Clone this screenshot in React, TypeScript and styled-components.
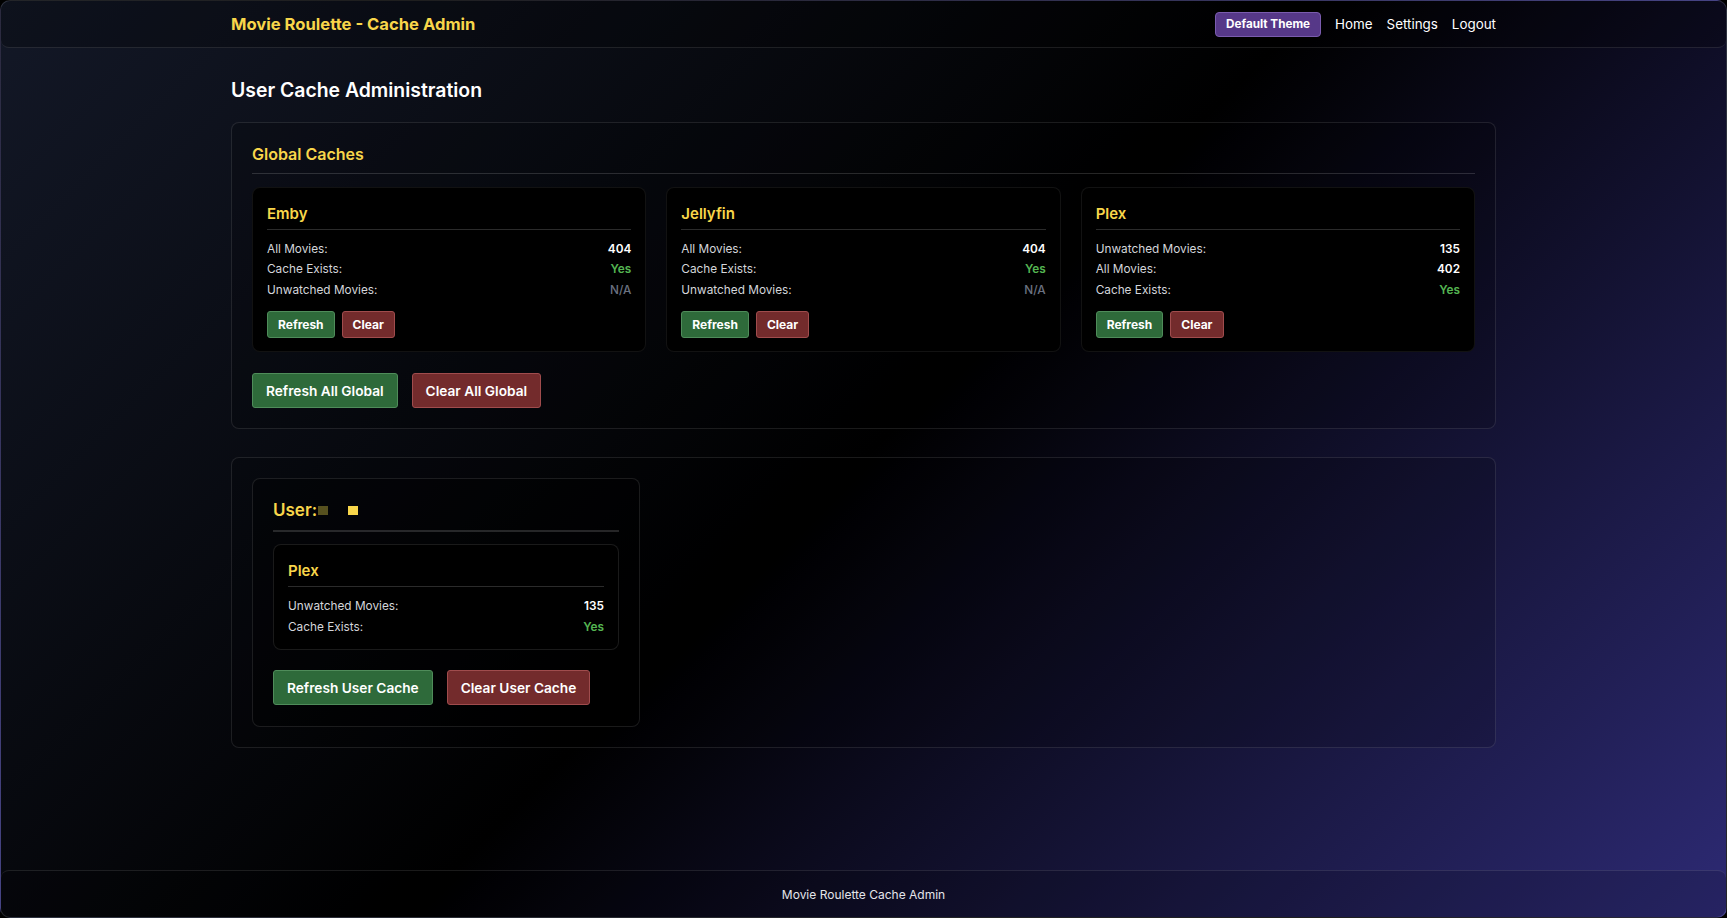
import React from "react";
import styled, { createGlobalStyle } from "styled-components";

const GlobalStyle = createGlobalStyle`
  html, body {
    margin: 0;
    padding: 0;
    background: #000;
  }
  body {
    font-family: Inter, "Noto Sans", "Liberation Sans", sans-serif;
    color: #fff;
  }
  * {
    box-sizing: border-box;
  }
`;

const Page = styled.div`
  min-height: 100vh;
  display: flex;
  flex-direction: column;
  background: linear-gradient(135deg, #131827 0%, #000 50%, #2d2a74 100%);
  border: 1px solid rgba(255, 255, 255, 0.12);
  border-radius: 10px;
  overflow: hidden;
`;

const Header = styled.header`
  height: 47px;
  display: flex;
  justify-content: center;
  background: rgba(0, 0, 0, 0.25);
  border-bottom: 1px solid rgba(255, 255, 255, 0.1);
  border-radius: 0 0 8px 8px;
`;

const Container = styled.div`
  width: 1265px;
  margin: 0 auto;
`;

const HeaderInner = styled(Container)`
  display: flex;
  align-items: center;
  justify-content: space-between;
`;

const Brand = styled.div`
  color: #f8d64a;
  font-size: 16.6px;
  font-weight: 700;
`;

const Nav = styled.nav`
  display: flex;
  align-items: center;
  gap: 14px;
`;

const ThemeButton = styled.button`
  height: 25px;
  padding: 0 10px;
  background: #563888;
  border: 1px solid #7a5cae;
  border-radius: 4px;
  color: #fff;
  font-family: inherit;
  font-size: 11.7px;
  font-weight: 700;
`;

const NavLink = styled.a`
  color: #fff;
  font-size: 13.4px;
  text-decoration: none;
`;

const Main = styled.main`
  flex: 1;
  padding-top: 30px;
`;

const PageTitle = styled.h1`
  margin: 0 0 20px;
  font-size: 19.4px;
  line-height: 24px;
  font-weight: 600;
  color: #fff;
`;

const Section = styled.section`
  padding: 20px;
  border: 1px solid rgba(255, 255, 255, 0.1);
  border-radius: 8px;
  background: rgba(0, 0, 0, 0.15);
  margin-bottom: 28px;
`;

const SectionHeading = styled.h2`
  margin: 0 0 13px;
  padding-bottom: 8px;
  border-bottom: 1px solid rgba(255, 255, 255, 0.15);
  color: #f8d64a;
  font-size: 16px;
  line-height: 22px;
  font-weight: 600;
`;

const CardGrid = styled.div`
  display: grid;
  grid-template-columns: repeat(3, 1fr);
  gap: 20px;
`;

const Card = styled.div<{ $bottom?: number }>`
  background: #000;
  border: 1px solid rgba(255, 255, 255, 0.07);
  border-radius: 8px;
  padding: 15px 14px ${(p) => p.$bottom ?? 12}px;
`;

const CardTitle = styled.h3`
  margin: 0 0 9px;
  padding-bottom: 5px;
  border-bottom: 1px solid rgba(255, 255, 255, 0.17);
  color: #f8d64a;
  font-size: 15px;
  line-height: 21px;
  font-weight: 600;
`;

const StatRow = styled.div`
  display: flex;
  justify-content: space-between;
  font-size: 11.8px;
  line-height: 20.4px;
`;

const StatLabel = styled.span`
  color: #d4d6db;
`;

const StatValue = styled.span<{ $tone?: "ok" | "muted" }>`
  font-weight: ${(p) => (p.$tone === "muted" ? 500 : 600)};
  color: ${(p) =>
    p.$tone === "ok" ? "#54b451" : p.$tone === "muted" ? "#6b7280" : "#fff"};
`;

const ButtonRow = styled.div<{ $gap: number; $top: number }>`
  display: flex;
  gap: ${(p) => p.$gap}px;
  margin-top: ${(p) => p.$top}px;
`;

const ActionButton = styled.button<{ $variant: "refresh" | "clear"; $size?: "sm" | "lg" }>`
  font-family: inherit;
  color: #fff;
  cursor: pointer;
  border-radius: 3px;
  background: ${(p) => (p.$variant === "refresh" ? "#2e6a3a" : "#732b2c")};
  border: 1px solid ${(p) => (p.$variant === "refresh" ? "#4f8c5a" : "#a04c4d")};
  height: ${(p) => (p.$size === "lg" ? "35px" : "27px")};
  padding: ${(p) => (p.$size === "lg" ? "0 13px" : "0 10px")};
  font-size: ${(p) => (p.$size === "lg" ? "13.7px" : "12px")};
  font-weight: ${(p) => (p.$size === "lg" ? 600 : 700)};
`;

const UserGrid = styled.div`
  display: grid;
  grid-template-columns: 388px;
`;

const UserCard = styled.div`
  border: 1px solid rgba(255, 255, 255, 0.1);
  border-radius: 8px;
  background: rgba(0, 0, 0, 0.35);
  padding: 20px 20px 21px;
`;

const UserHeading = styled.h3`
  margin: 0 0 12px;
  padding-bottom: 9px;
  border-bottom: 2px solid rgba(255, 255, 255, 0.15);
  color: #f8d64a;
  font-size: 17px;
  line-height: 22px;
  font-weight: 600;
  display: flex;
  align-items: center;
`;

const Redact = styled.span<{ $color: string; $gap: number }>`
  display: inline-block;
  width: 10px;
  height: 9px;
  margin-left: ${(p) => p.$gap}px;
  background: ${(p) => p.$color};
`;

const InnerCard = styled(Card)`
  border-color: rgba(255, 255, 255, 0.1);
`;

const Footer = styled.footer`
  height: 47px;
  display: flex;
  align-items: center;
  justify-content: center;
  border-top: 1px solid rgba(255, 255, 255, 0.1);
  border-radius: 8px 8px 10px 10px;
  background: rgba(0, 0, 0, 0.15);
  font-size: 12px;
  color: #e4e5ea;
`;

type Stat = { label: string; value: string; tone?: "ok" | "muted" };

const globalCaches: { name: string; stats: Stat[] }[] = [
  {
    name: "Emby",
    stats: [
      { label: "All Movies:", value: "404" },
      { label: "Cache Exists:", value: "Yes", tone: "ok" },
      { label: "Unwatched Movies:", value: "N/A", tone: "muted" },
    ],
  },
  {
    name: "Jellyfin",
    stats: [
      { label: "All Movies:", value: "404" },
      { label: "Cache Exists:", value: "Yes", tone: "ok" },
      { label: "Unwatched Movies:", value: "N/A", tone: "muted" },
    ],
  },
  {
    name: "Plex",
    stats: [
      { label: "Unwatched Movies:", value: "135" },
      { label: "All Movies:", value: "402" },
      { label: "Cache Exists:", value: "Yes", tone: "ok" },
    ],
  },
];

const userStats: Stat[] = [
  { label: "Unwatched Movies:", value: "135" },
  { label: "Cache Exists:", value: "Yes", tone: "ok" },
];

const Stats = ({ stats }: { stats: Stat[] }) => (
  <>
    {stats.map((s) => (
      <StatRow key={s.label}>
        <StatLabel>{s.label}</StatLabel>
        <StatValue $tone={s.tone}>{s.value}</StatValue>
      </StatRow>
    ))}
  </>
);

const App = () => {
  return (
    <>
      <GlobalStyle />
      <Page>
        <Header>
          <HeaderInner>
            <Brand>Movie Roulette - Cache Admin</Brand>
            <Nav>
              <ThemeButton>Default Theme</ThemeButton>
              <NavLink href="#">Home</NavLink>
              <NavLink href="#">Settings</NavLink>
              <NavLink href="#">Logout</NavLink>
            </Nav>
          </HeaderInner>
        </Header>

        <Main>
          <Container>
            <PageTitle>User Cache Administration</PageTitle>

            <Section>
              <SectionHeading>Global Caches</SectionHeading>
              <CardGrid>
                {globalCaches.map((c) => (
                  <Card key={c.name} $bottom={13}>
                    <CardTitle>{c.name}</CardTitle>
                    <Stats stats={c.stats} />
                    <ButtonRow $gap={7} $top={11}>
                      <ActionButton $variant="refresh">Refresh</ActionButton>
                      <ActionButton $variant="clear">Clear</ActionButton>
                    </ButtonRow>
                  </Card>
                ))}
              </CardGrid>
              <ButtonRow $gap={14} $top={21}>
                <ActionButton $variant="refresh" $size="lg">
                  Refresh All Global
                </ActionButton>
                <ActionButton $variant="clear" $size="lg">
                  Clear All Global
                </ActionButton>
              </ButtonRow>
            </Section>

            <Section>
              <UserGrid>
                <UserCard>
                  <UserHeading>
                    User:
                    <Redact $color="#57511f" $gap={1} />
                    <Redact $color="#f8d64a" $gap={20} />
                  </UserHeading>
                  <InnerCard>
                    <CardTitle>Plex</CardTitle>
                    <Stats stats={userStats} />
                  </InnerCard>
                  <ButtonRow $gap={14} $top={20}>
                    <ActionButton $variant="refresh" $size="lg">
                      Refresh User Cache
                    </ActionButton>
                    <ActionButton $variant="clear" $size="lg">
                      Clear User Cache
                    </ActionButton>
                  </ButtonRow>
                </UserCard>
              </UserGrid>
            </Section>
          </Container>
        </Main>

        <Footer>Movie Roulette Cache Admin</Footer>
      </Page>
    </>
  );
};

export default App;
